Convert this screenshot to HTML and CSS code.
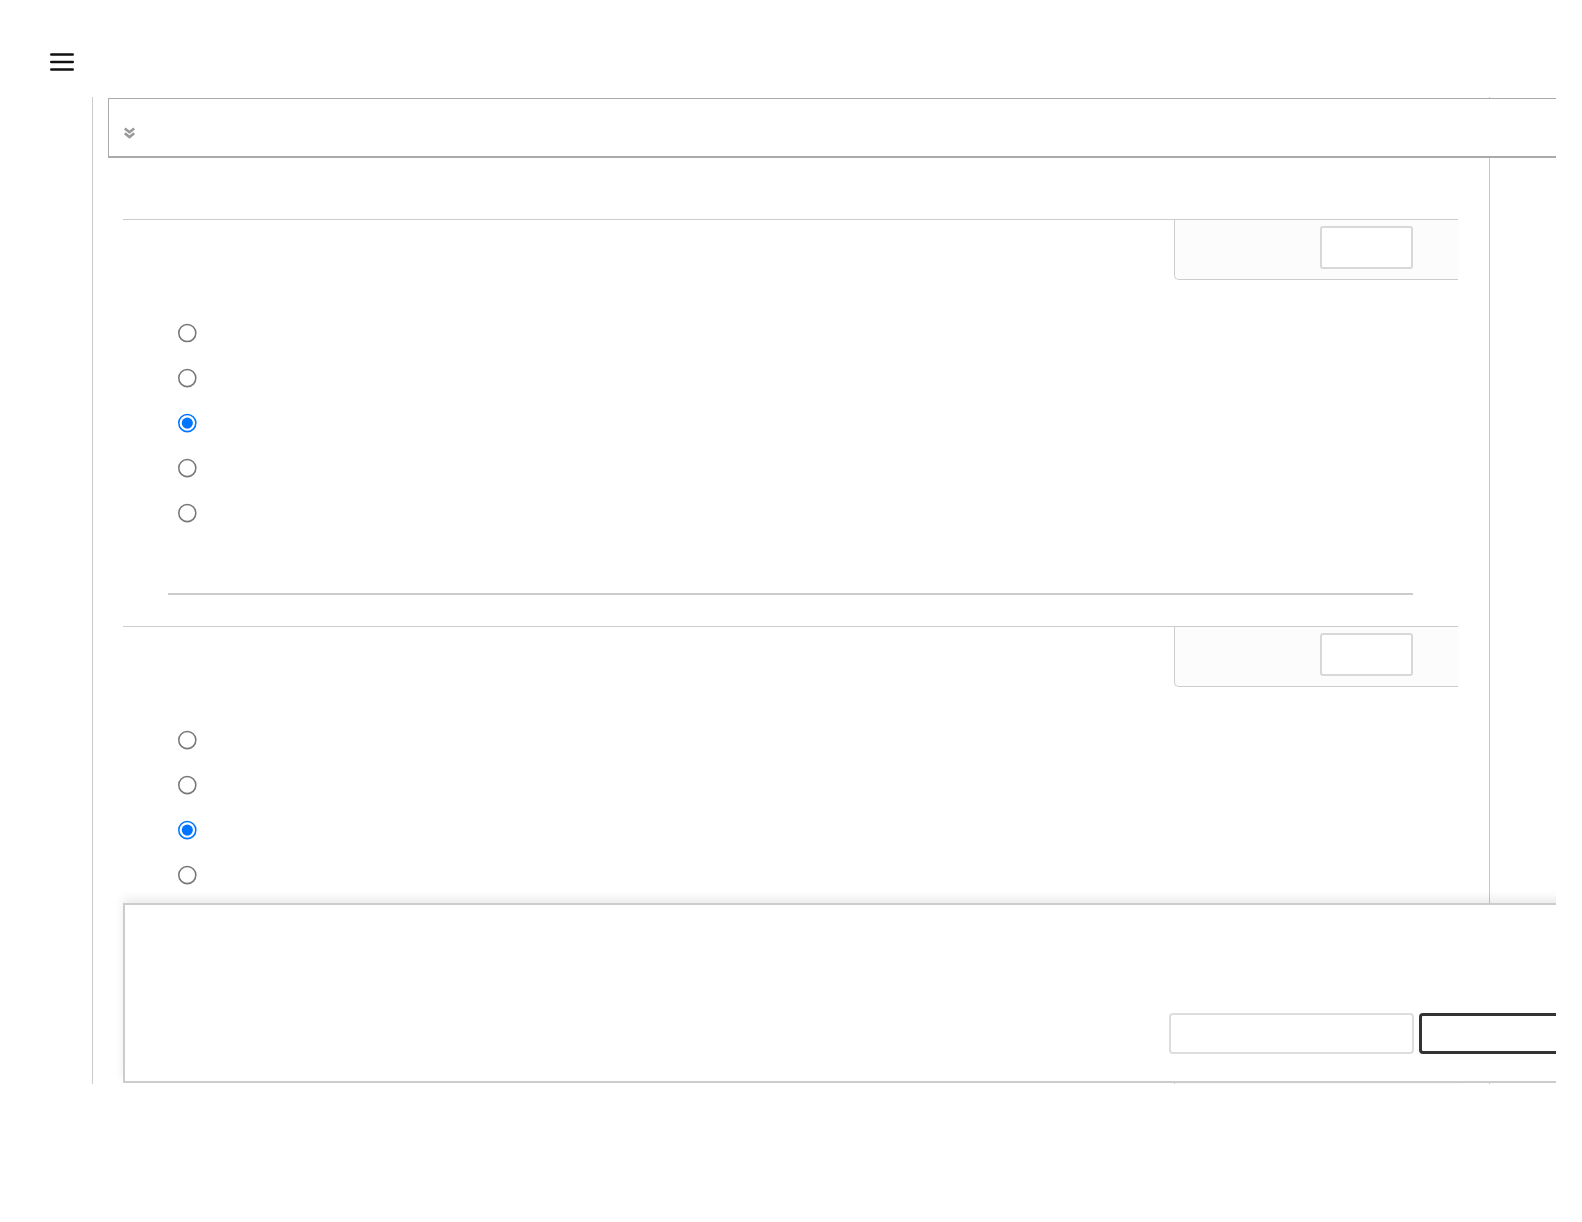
FILE: index.html
```html
<!DOCTYPE html>
<html lang="en">
<head>
    <meta charset="UTF-8">
    <meta name="viewport" content="width=device-width, initial-scale=1.0">
    <title>Survey</title>
    <link rel="stylesheet" href="styles.css">
</head>
<body>

    <div class="page">
        <!-- Top bar with menu button -->
        <header class="topbar">
            <svg class="menu-icon" width="24" height="18" viewBox="0 0 24 18">
                <line x1="1.3" y1="1.5" x2="22.7" y2="1.5"/>
                <line x1="1.3" y1="9" x2="22.7" y2="9"/>
                <line x1="1.3" y1="16.5" x2="22.7" y2="16.5"/>
            </svg>
        </header>

        <div class="frame">
            <div class="sheet">
                <!-- Collapsible toolbar -->
                <div class="toolbar">
                    <svg class="expand-icon" width="13" height="12" viewBox="0 0 13 12">
                        <polyline points="1.8,1.5 6.5,5.2 11.2,1.5"/>
                        <polyline points="1.8,6.3 6.5,10 11.2,6.3"/>
                    </svg>
                </div>

                <!-- Question 1 -->
                <section class="question">
                    <div class="question-head">
                        <div class="score-box">
                            <div class="score-input"></div>
                        </div>
                    </div>
                    <div class="options">
                        <label class="option"><input type="radio" name="q1"></label>
                        <label class="option"><input type="radio" name="q1"></label>
                        <label class="option"><input type="radio" name="q1" checked></label>
                        <label class="option"><input type="radio" name="q1"></label>
                        <label class="option"><input type="radio" name="q1"></label>
                    </div>
                    <hr class="divider">
                </section>

                <!-- Question 2 -->
                <section class="question">
                    <div class="question-head">
                        <div class="score-box">
                            <div class="score-input"></div>
                        </div>
                    </div>
                    <div class="options">
                        <label class="option"><input type="radio" name="q2"></label>
                        <label class="option"><input type="radio" name="q2"></label>
                        <label class="option"><input type="radio" name="q2" checked></label>
                        <label class="option"><input type="radio" name="q2"></label>
                        <label class="option"><input type="radio" name="q2"></label>
                    </div>
                    <hr class="divider">
                </section>

                <!-- Question 3 -->
                <section class="question">
                    <div class="question-head">
                        <div class="score-box">
                            <div class="score-input"></div>
                        </div>
                    </div>
                </section>
            </div>

            <!-- Sticky action panel -->
            <div class="action-panel">
                <button class="btn btn-light" type="button"></button>
                <button class="btn btn-dark" type="button"></button>
            </div>
        </div>
    </div>

</body>
</html>
```

FILE: styles.css
```css
/* General Reset */
* {
    margin: 0;
    padding: 0;
    box-sizing: border-box;
    font-family: "Liberation Sans", Arial, sans-serif;
}

body {
    background-color: #fff;
    color: #333;
}

/* Page is clipped a bit before the window edge */
.page {
    width: 1556px;
    overflow: hidden;
}

/* Top bar */
.topbar {
    height: 97px;
    padding: 53px 0 0 50px;
}

.menu-icon line {
    stroke: #111;
    stroke-width: 2.6;
    stroke-linecap: round;
}

/* Frame around the form */
.frame {
    position: relative;
    margin-left: 92px;
    width: 1464px;
    height: 987px;
    border-left: 1px solid #ccc;
    overflow: hidden;
}

.sheet {
    width: 1397px;
    height: 100%;
    padding: 1px 31px 0 30px;
    border-right: 1px solid #c8c8c8;
}

/* Toolbar */
.toolbar {
    width: 1448px;
    height: 60px;
    margin-left: -15px;
    padding: 28px 0 0 14px;
    background: #fff;
    border-top: 1px solid #aaa;
    border-left: 1px solid #aaa;
    border-bottom: 2px solid #aaa;
}

.expand-icon {
    display: block;
}

.expand-icon polyline {
    fill: none;
    stroke: #999;
    stroke-width: 2.6;
}

/* Questions */
.question {
    border-top: 1px solid #ccc;
}

.toolbar + .question {
    margin-top: 61px;
}

.question-head {
    display: flex;
    justify-content: flex-end;
}

.score-box {
    display: flex;
    justify-content: flex-end;
    width: 284px;
    height: 60px;
    padding: 6px 45px 0 0;
    background: #fcfcfc;
    border-left: 1px solid #ccc;
    border-bottom: 1px solid #ccc;
    border-bottom-left-radius: 5px;
}

.score-input {
    width: 93px;
    height: 43px;
    background: #fff;
    border: 2px solid #d8d8d8;
    border-radius: 3px;
}

.options {
    margin-top: 31px;
    padding-left: 55px;
}

.option {
    display: flex;
    align-items: center;
    height: 45px;
}

.option input[type="radio"] {
    width: 13px;
    height: 13px;
    margin: 0;
    zoom: 1.55;
}

.divider {
    height: 2px;
    margin: 57px 45px 31px;
    border: none;
    background: #ccc;
}

/* Action panel */
.action-panel {
    position: absolute;
    left: 30px;
    bottom: 1px;
    width: 1500px;
    height: 180px;
    display: flex;
    gap: 5px;
    padding: 108px 0 0 1044px;
    background: #fff;
    border: 2px solid #ccc;
    box-shadow: 0 -5px 9px rgba(0, 0, 0, 0.08);
}

.btn {
    flex-shrink: 0;
    width: 245px;
    height: 41px;
    background: #fff;
    border-radius: 4px;
    cursor: pointer;
}

.btn-light {
    border: 2px solid #ddd;
}

.btn-dark {
    border: 3px solid #333;
}
```
